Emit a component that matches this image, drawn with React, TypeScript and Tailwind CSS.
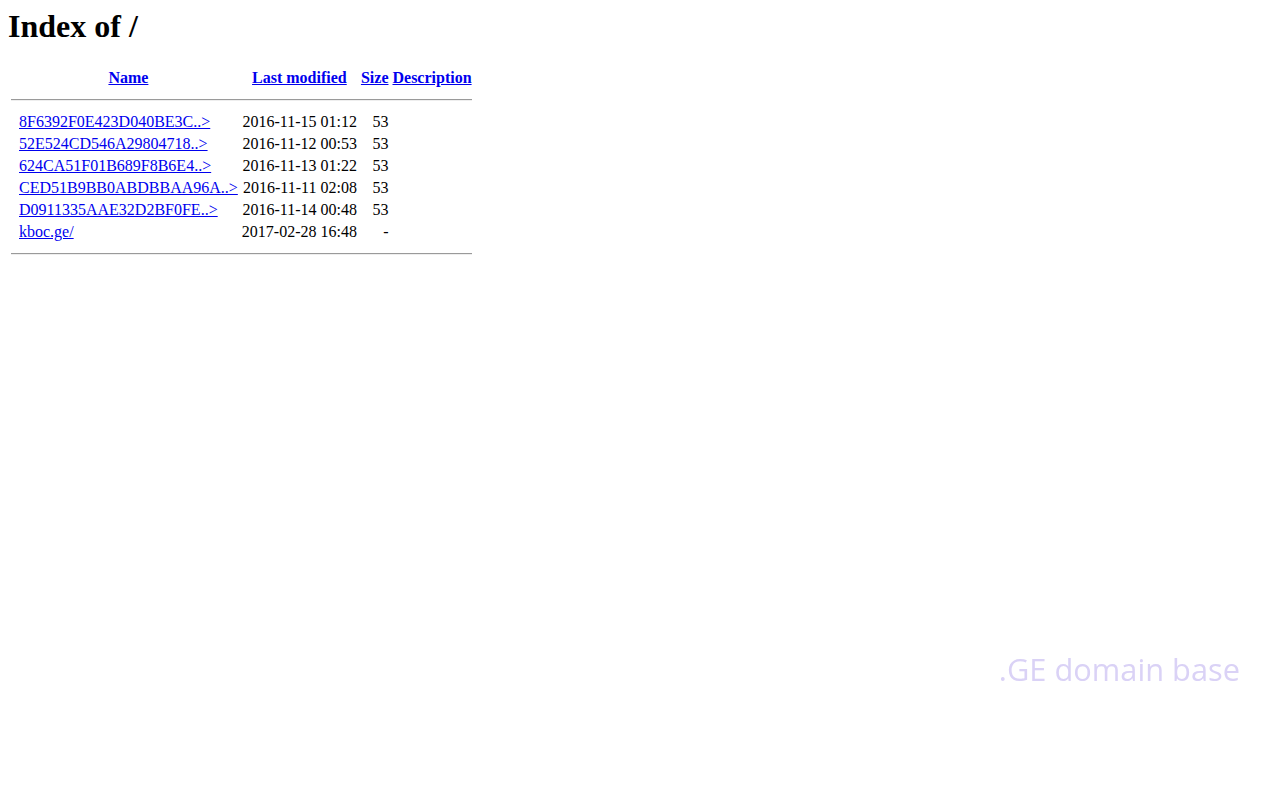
import React from "react";

const rows = [
  { name: "8F6392F0E423D040BE3C..>", modified: "2016-11-15 01:12", size: "53" },
  { name: "52E524CD546A29804718..>", modified: "2016-11-12 00:53", size: "53" },
  { name: "624CA51F01B689F8B6E4..>", modified: "2016-11-13 01:22", size: "53" },
  { name: "CED51B9BB0ABDBBAA96A..>", modified: "2016-11-11 02:08", size: "53" },
  { name: "D0911335AAE32D2BF0FE..>", modified: "2016-11-14 00:48", size: "53" },
  { name: "kboc.ge/", modified: "2017-02-28 16:48", size: "-" },
];

function Rule() {
  return (
    <tr>
      <th colSpan={5} className="p-px">
        <hr className="my-2 h-0 border-t border-b border-t-[#9a9a9a] border-b-[#eeeeee]" />
      </th>
    </tr>
  );
}

export default function App() {
  return (
    <div className="min-h-screen bg-white p-2 text-black font-['Liberation_Serif',serif] text-base leading-[normal]">
      <h1 className="text-[32px] font-bold leading-[normal] mb-[21.44px]">Index of /</h1>
      <table className="border-separate border-spacing-[2px]">
        <tbody>
          <tr>
            <th className="p-px align-top">&nbsp;</th>
            <th className="p-px">
              <a href="#" className="text-[#0000ee] underline">Name</a>
            </th>
            <th className="p-px">
              <a href="#" className="text-[#0000ee] underline">Last modified</a>
            </th>
            <th className="p-px">
              <a href="#" className="text-[#0000ee] underline">Size</a>
            </th>
            <th className="p-px">
              <a href="#" className="text-[#0000ee] underline">Description</a>
            </th>
          </tr>
          <Rule />
          {rows.map((r) => (
            <tr key={r.name}>
              <td className="p-px align-top">&nbsp;</td>
              <td className="p-px">
                <a href="#" className="text-[#0000ee] underline">{r.name}</a>
              </td>
              <td className="p-px text-right">{r.modified} </td>
              <td className="p-px text-right">{r.size}</td>
              <td className="p-px">&nbsp;</td>
            </tr>
          ))}
          <Rule />
        </tbody>
      </table>
      <div className="fixed top-[648px] right-[40px] font-['Open_Sans',sans-serif] text-[30.8px] leading-[normal] text-[#dad2f6]">
        .GE domain base
      </div>
    </div>
  );
}
